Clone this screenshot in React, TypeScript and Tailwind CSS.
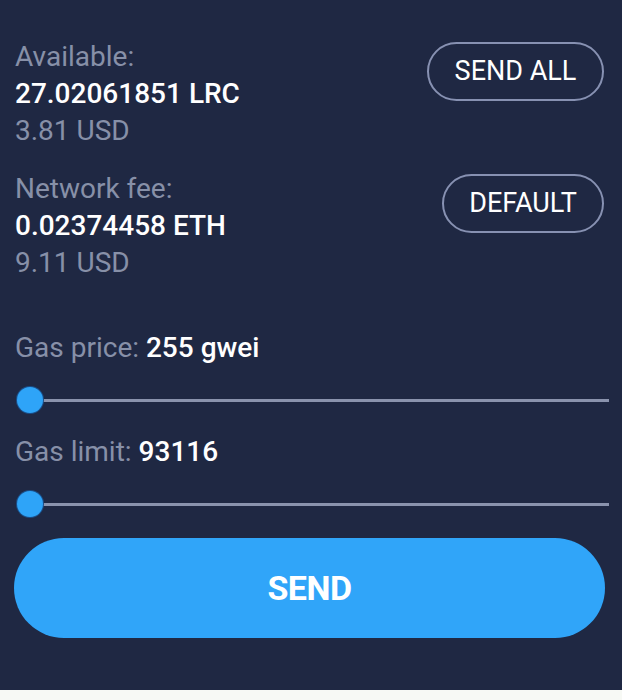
import React from "react";

function Slider() {
  return (
    <div className="relative h-[26px] flex items-center">
      <div className="ml-[17px] w-[592px] h-[3px] bg-[#8a93ad]" />
      <div className="absolute left-[17px] top-0 w-[26px] h-[26px] rounded-full bg-[#2ea4f8] ring-1 ring-[#1a4f8a]" />
    </div>
  );
}

export default function App() {
  return (
    <div
      className="w-[622px] h-[700px] bg-[#f7f9f5] flex flex-col"
      style={{ fontFamily: "Roboto, 'Liberation Sans', sans-serif" }}
    >
      <div className="h-[690px] bg-[#1f2843] pl-[15px] pr-[18px] pt-[38px] flex flex-col text-[28px] leading-[37px]">
        <div className="flex items-start justify-between">
          <div className="flex flex-col">
            <span className="text-[#8790a8]">Available:</span>
            <span className="text-white font-medium">27.02061851 LRC</span>
            <span className="text-[#8790a8]">3.81 USD</span>
          </div>
          <button className="mt-[4px] w-[177px] h-[59px] rounded-full border-2 border-[#8791b2] text-white text-[27px]">
            SEND ALL
          </button>
        </div>
        <div className="mt-[21px] flex items-start justify-between">
          <div className="flex flex-col">
            <span className="text-[#8790a8]">Network fee:</span>
            <span className="text-white font-medium">0.02374458 ETH</span>
            <span className="text-[#8790a8]">9.11 USD</span>
          </div>
          <button className="mt-[4px] w-[162px] h-[59px] rounded-full border-2 border-[#8791b2] text-white text-[27px]">
            DEFAULT
          </button>
        </div>
        <div className="mt-[48px]">
          <span className="text-[#8790a8]">Gas price: </span>
          <span className="text-white font-medium">255 gwei</span>
        </div>
        <div className="mt-[21px] -ml-[15px] -mr-[18px]">
          <Slider />
        </div>
        <div className="mt-[20px]">
          <span className="text-[#8790a8]">Gas limit: </span>
          <span className="text-white font-medium">93116</span>
        </div>
        <div className="mt-[21px] -ml-[15px] -mr-[18px]">
          <Slider />
        </div>
        <button className="mt-[21px] -ml-[1px] w-[591px] h-[100px] rounded-full bg-[#30a5f9] text-white font-bold text-[34px] tracking-[-0.5px]">
          SEND
        </button>
      </div>
    </div>
  );
}
